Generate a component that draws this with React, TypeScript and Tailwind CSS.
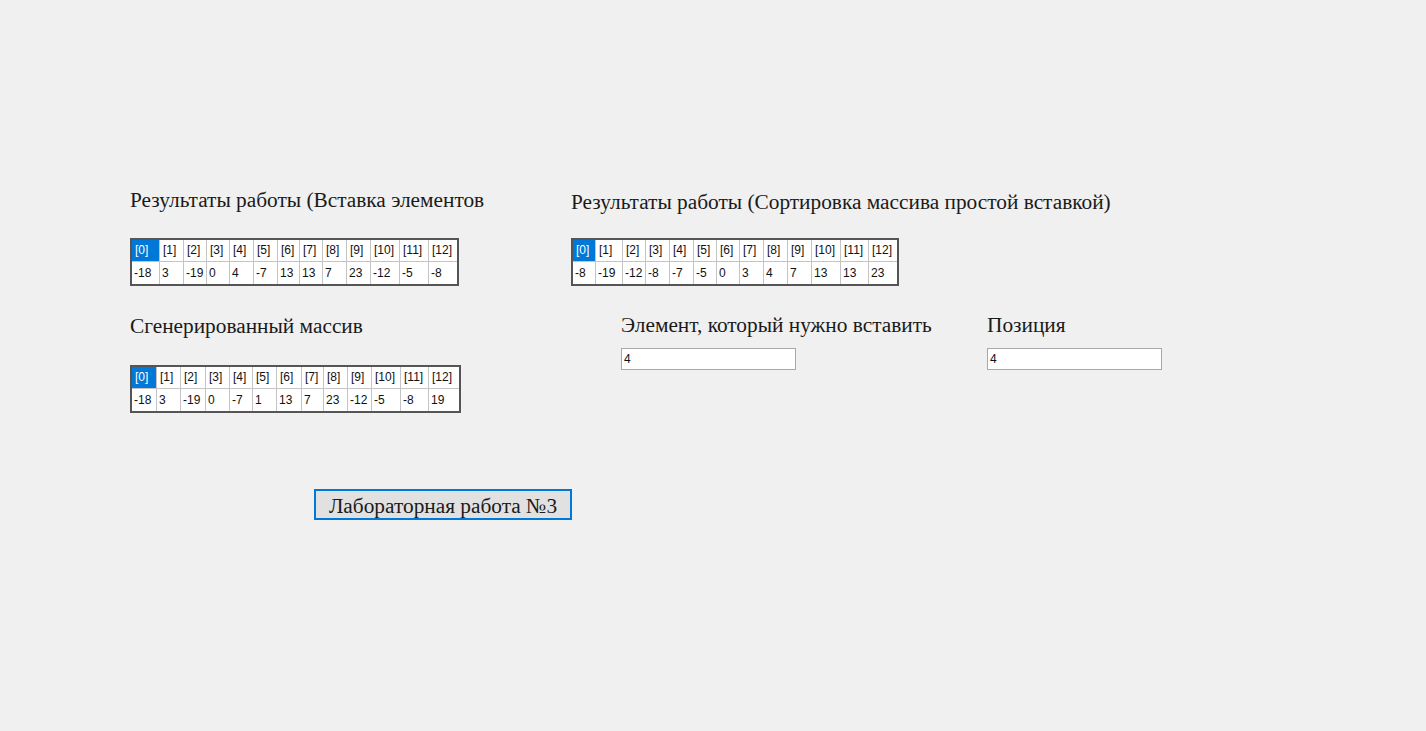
type Grid = {
  values: number[]
  widths: number[]
}

const resultInsert: Grid = {
  values: [-18, 3, -19, 0, 4, -7, 13, 13, 7, 23, -12, -5, -8],
  widths: [28, 24, 23, 23, 24, 24, 22, 23, 24, 24, 29, 29, 28]
}

const generated: Grid = {
  values: [-18, 3, -19, 0, -7, 1, 13, 7, 23, -12, -5, -8, 19],
  widths: [25, 24, 25, 24, 23, 24, 25, 22, 24, 24, 29, 28, 30]
}

const sorted: Grid = {
  values: [-8, -19, -12, -8, -7, -5, 0, 3, 4, 7, 13, 13, 23],
  widths: [23, 27, 23, 24, 24, 23, 23, 24, 24, 24, 29, 28, 28]
}

const serif = "font-['Liberation_Serif','Times_New_Roman',serif]"

function ArrayGrid({ grid }: { grid: Grid }) {
  return (
    <div className="w-fit border-2 border-[#555] bg-white font-['Liberation_Sans',Arial,sans-serif] text-[12px] text-[#111]">
      <div className="flex">
        {grid.widths.map((w, i) => (
          <div
            key={i}
            style={{ width: w }}
            className={
              'h-[22px] border-b border-r border-[#c4c4c4] pl-[3px] leading-[21px] last:border-r-0 ' +
              (i === 0 ? 'bg-[#0078d7] text-white' : '')
            }
          >
            [{i}]
          </div>
        ))}
      </div>
      <div className="flex">
        {grid.values.map((v, i) => (
          <div
            key={i}
            style={{ width: grid.widths[i] }}
            className="h-[22px] border-r border-[#c4c4c4] pl-[2px] leading-[22px] last:border-r-0"
          >
            {v}
          </div>
        ))}
      </div>
    </div>
  )
}

function Title({ children, className = '' }: { children: string; className?: string }) {
  return (
    <p className={`${serif} h-[24px] whitespace-nowrap text-[21.33px] leading-[24px] text-[#1a1a1a] ${className}`}>
      {children}
    </p>
  )
}

function Field({ label, value, className = '' }: { label: string; value: string; className?: string }) {
  return (
    <div className={`flex flex-col ${className}`}>
      <Title>{label}</Title>
      <input
        readOnly
        value={value}
        className="mt-[11px] h-[22px] w-[175px] border border-[#a8a8a8] bg-white px-[2px] font-['Liberation_Sans',Arial,sans-serif] text-[12px] text-[#111] outline-none"
      />
    </div>
  )
}

export default function App() {
  return (
    <div className="flex min-h-[731px] w-full bg-[#f0f0f0] pl-[130px] pt-[188px]">
      <div className="flex w-[441px] flex-col">
        <Title>Результаты работы (Вставка элементов</Title>
        <div className="mt-[26px]">
          <ArrayGrid grid={resultInsert} />
        </div>
        <Title className="mt-[28px]">Сгенерированный массив</Title>
        <div className="mt-[27px]">
          <ArrayGrid grid={generated} />
        </div>
        <button
          className={`${serif} ml-[184px] mt-[76px] h-[31px] w-[258px] border-2 border-[#0078d7] bg-[#e1e1e1] text-[21.33px] text-[#1a1a1a]`}
        >
          Лабораторная работа №3
        </button>
      </div>

      <div className="flex flex-col pt-[2px]">
        <Title>Результаты работы (Сортировка массива простой вставкой)</Title>
        <div className="mt-[24px]">
          <ArrayGrid grid={sorted} />
        </div>
        <div className="ml-[50px] mt-[27px] flex">
          <Field className="w-[366px]" label="Элемент, который нужно вставить" value="4" />
          <Field label="Позиция" value="4" />
        </div>
      </div>
    </div>
  )
}
